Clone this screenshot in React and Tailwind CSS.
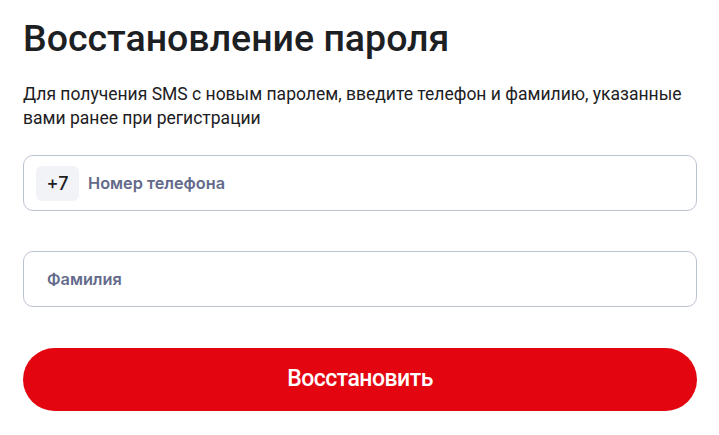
export default function App() {
  return (
    <div className="min-h-screen bg-white pl-[23px] pr-[22px] pt-[14px] font-['Roboto',sans-serif]">
      <h1 className="text-[37.5px] font-medium leading-[48px] text-[#1d2023]">
        Восстановление пароля
      </h1>
      <p className="mt-[20px] text-[17.5px] leading-[24px] text-[#1d2023]">
        Для получения SMS с новым паролем, введите телефон и фамилию, указанные вами ранее при регистрации
      </p>

      <div className="mt-[25px] flex h-[56px] items-center gap-[9px] rounded-[10px] border border-[#bcc3d0] px-[12px]">
        <span className="flex h-[35px] w-[43px] items-center justify-center rounded-[6px] bg-[#f2f3f7] font-['Inter',sans-serif] text-[18px] font-medium text-[#1d2023]">
          +7
        </span>
        <input
          placeholder="Номер телефона"
          className="flex-1 bg-transparent font-['Inter',sans-serif] text-[16.3px] font-semibold text-[#1d2023] outline-none placeholder:text-[#636a8a]"
        />
      </div>

      <div className="mt-[40px] flex h-[56px] items-center rounded-[10px] border border-[#bcc3d0] px-[23px]">
        <input
          placeholder="Фамилия"
          className="flex-1 bg-transparent font-['Inter',sans-serif] text-[16.3px] font-semibold text-[#1d2023] outline-none placeholder:text-[#636a8a]"
        />
      </div>

      <button className="mt-[41px] flex h-[63px] w-full items-center justify-center rounded-full bg-[#e30611] text-[23px] font-medium tracking-[-0.5px] text-white">
        Восстановить
      </button>
    </div>
  );
}
